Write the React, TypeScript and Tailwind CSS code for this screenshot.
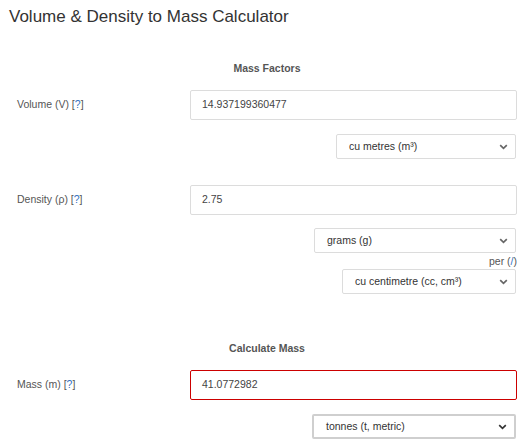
import React from "react";

const Chevron = ({ dark }: { dark?: boolean }) => (
  <svg width="9" height="6" viewBox="0 0 9 6" className="absolute right-[7px] top-1/2 -translate-y-1/2">
    <path d="M1.2 1.2 L4.5 4.3 L7.8 1.2" fill="none" stroke={dark ? "#333" : "#666"} strokeWidth="1.7" />
  </svg>
);

const Select = ({ text, w, strong }: { text: string; w: string; strong?: boolean }) => (
  <div
    className={`relative h-[25px] ${w} bg-white rounded-[2px] flex items-center pl-[12px] text-[10.5px] text-[#333] ${
      strong ? "border-2 border-[#cfcfcf]" : "border border-[#dcdcdc]"
    }`}
  >
    <span>{text}</span>
    <Chevron dark={strong} />
  </div>
);

const Label = ({ text }: { text: string }) => (
  <div className="w-[173px] text-[10.5px] text-[#555]">
    {text} [<span className="text-[#2f6fbf]">?</span>]
  </div>
);

const Input = ({ value, red }: { value: string; red?: boolean }) => (
  <div
    className={`flex-1 h-[30px] flex items-center pl-[11px] text-[10.5px] text-[#444] rounded-[2px] bg-white ${
      red ? "border border-[#cc0000]" : "border border-[#dcdcdc]"
    }`}
  >
    {value}
  </div>
);

export default function App() {
  return (
    <div className="w-[526px] h-[444px] bg-white overflow-hidden" style={{ fontFamily: '"Liberation Sans", Arial, sans-serif' }}>
      <h1 className="pl-[9px] pt-[7px] text-[17px] leading-[20px] text-[#333]">Volume &amp; Density to Mass Calculator</h1>

      <div className="mt-[34px] pl-[17px] pr-[9px]">
        <div className="text-center text-[10.5px] leading-[14px] font-bold text-[#555]">Mass Factors</div>

        <div className="mt-[15px] flex items-center">
          <Label text="Volume (V)" />
          <Input value="14.937199360477" />
        </div>
        <div className="mt-[14px] flex justify-end pr-[1px]">
          <Select text="cu metres (m³)" w="w-[180px]" />
        </div>

        <div className="mt-[26px] flex items-center">
          <Label text="Density (ρ)" />
          <Input value="2.75" />
        </div>
        <div className="mt-[13px] flex justify-end pr-[1px]">
          <Select text="grams (g)" w="w-[202px]" />
        </div>
        <div className="text-right text-[10.5px] leading-[16px] text-[#555]">
          per (<span className="text-[#2f6fbf]">/</span>)
        </div>
        <div className="flex justify-end pr-[1px]">
          <Select text="cu centimetre (cc, cm³)" w="w-[174px]" />
        </div>

        <div className="mt-[47px] text-center text-[10.5px] leading-[14px] font-bold text-[#555]">Calculate Mass</div>

        <div className="mt-[15px] flex items-center">
          <Label text="Mass (m)" />
          <Input value="41.0772982" red />
        </div>
        <div className="mt-[14px] flex justify-end pr-[1px]">
          <Select text="tonnes (t, metric)" w="w-[204px]" strong />
        </div>
      </div>
    </div>
  );
}
